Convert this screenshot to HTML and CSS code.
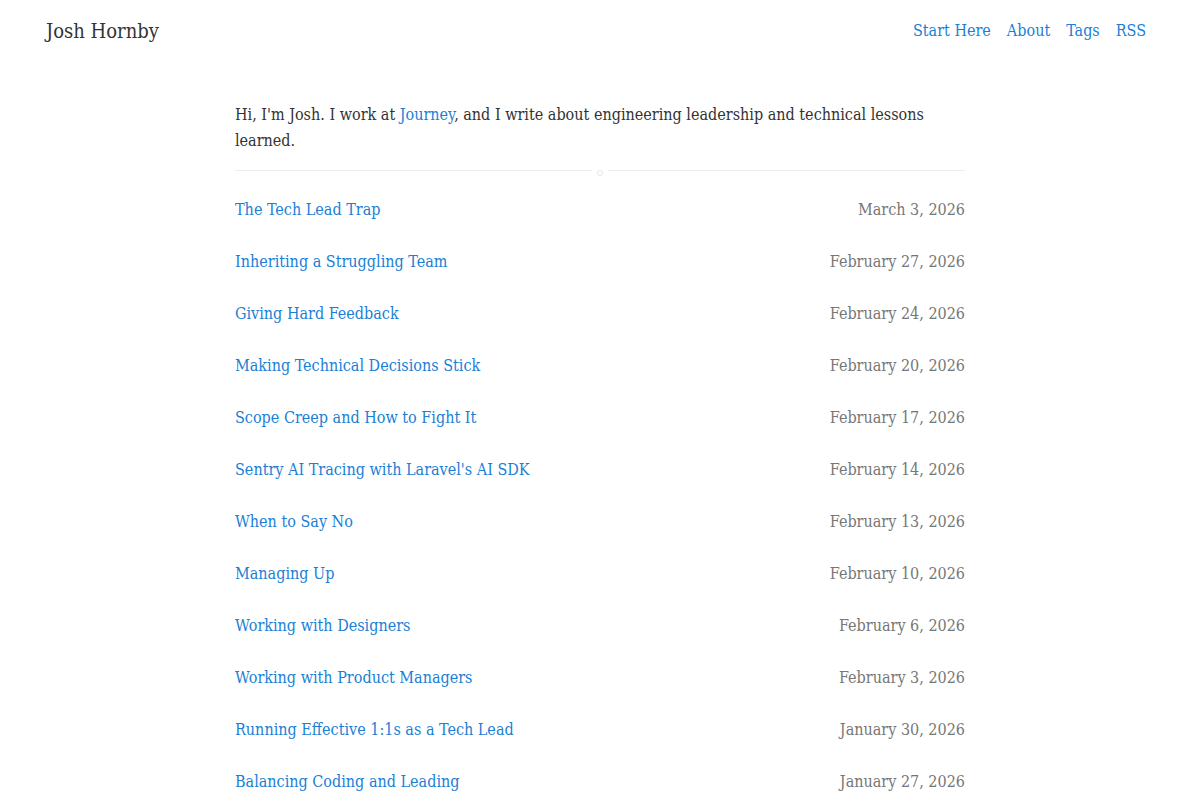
FILE: index.html
```html
<!DOCTYPE html>
<html lang="en">

<head>
    <meta charset="UTF-8">
    <meta name="viewport" content="width=device-width, initial-scale=1.0">
    <title>Josh Hornby</title>
    <link rel="stylesheet" href="styles.css">
</head>

<body>
    <header class="site-header">
        <a class="site-title" href="#">Josh Hornby</a>
        <nav class="site-nav">
            <a href="#">Start Here</a>
            <a href="#">About</a>
            <a href="#">Tags</a>
            <a href="#">RSS</a>
        </nav>
    </header>

    <main class="content">
        <p class="intro">Hi, I'm Josh. I work at <a href="#">Journey</a>, and I write about engineering leadership and technical lessons learned.</p>

        <div class="divider">
            <span class="line"></span>
            <span class="dot"></span>
            <span class="line"></span>
        </div>

        <ul class="posts">
            <li><a href="#">The Tech Lead Trap</a><time>March 3, 2026</time></li>
            <li><a href="#">Inheriting a Struggling Team</a><time>February 27, 2026</time></li>
            <li><a href="#">Giving Hard Feedback</a><time>February 24, 2026</time></li>
            <li><a href="#">Making Technical Decisions Stick</a><time>February 20, 2026</time></li>
            <li><a href="#">Scope Creep and How to Fight It</a><time>February 17, 2026</time></li>
            <li><a href="#">Sentry AI Tracing with Laravel's AI SDK</a><time>February 14, 2026</time></li>
            <li><a href="#">When to Say No</a><time>February 13, 2026</time></li>
            <li><a href="#">Managing Up</a><time>February 10, 2026</time></li>
            <li><a href="#">Working with Designers</a><time>February 6, 2026</time></li>
            <li><a href="#">Working with Product Managers</a><time>February 3, 2026</time></li>
            <li><a href="#">Running Effective 1:1s as a Tech Lead</a><time>January 30, 2026</time></li>
            <li><a href="#">Balancing Coding and Leading</a><time>January 27, 2026</time></li>
        </ul>
    </main>
</body>

</html>
```

FILE: styles.css
```css
* {
    margin: 0;
    padding: 0;
    box-sizing: border-box;
}

body {
    background-color: #fff;
    color: #333;
    font-family: "DejaVu Serif", "Liberation Serif", serif;
    font-stretch: condensed;
    font-size: 16px;
    line-height: 26px;
}

a {
    color: #1b7fd6;
    text-decoration: none;
}

.site-header {
    display: flex;
    justify-content: space-between;
    align-items: center;
    padding: 18px 54px 0 46px;
}

.site-title {
    color: #333;
    font-size: 20px;
}

.site-nav {
    display: flex;
    gap: 16px;
}

.content {
    width: 730px;
    margin: 58px auto 0;
}

.intro {
    color: #333;
}

.divider {
    display: flex;
    align-items: center;
    margin: 13px 0 24px;
}

.divider .line {
    flex: 1;
    height: 1px;
    background-color: #ececec;
}

.divider .dot {
    width: 6px;
    height: 6px;
    margin: 0 5px;
    border: 1px solid #e6e6e6;
    border-radius: 50%;
    transform: translateY(3px);
}

.posts {
    list-style: none;
}

.posts li {
    display: flex;
    justify-content: space-between;
    align-items: baseline;
    height: 52px;
}

.posts time {
    color: #777;
}
```
